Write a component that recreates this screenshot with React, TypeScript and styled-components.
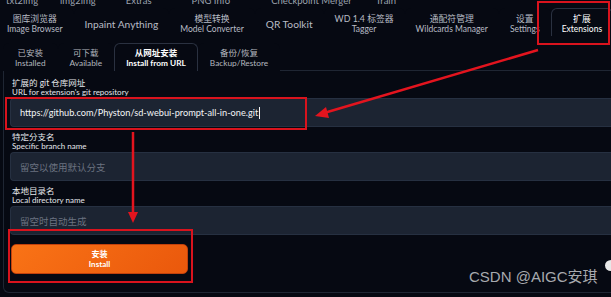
import React from "react";
import styled, { createGlobalStyle } from "styled-components";

const GlobalStyle = createGlobalStyle`
  html, body {
    margin: 0;
    padding: 0;
    background: #060912;
    overflow: hidden;
  }
  body {
    font-family: Lato, "Noto Sans CJK SC", sans-serif;
  }
`;

const Page = styled.div`
  position: relative;
  width: 611px;
  height: 297px;
  overflow: hidden;
  background: #060912;
  color: #e5e7eb;
`;

const TopRow = styled.div`
  display: flex;
  height: 8px;
  overflow: hidden;
`;

const TopItem = styled.span<{ $ml: number }>`
  margin-left: ${p => p.$ml}px;
  margin-top: -5px;
  font-size: 9.5px;
  line-height: 12px;
  color: #9ca3af;
  white-space: nowrap;
`;

const MainTabs = styled.div`
  display: flex;
  height: 28px;
  margin-left: -4px;
  box-sizing: border-box;
  border-bottom: 1px solid #1a202c;
`;

const Tab = styled.div<{ $active?: boolean }>`
  display: flex;
  flex-direction: column;
  align-items: center;
  justify-content: center;
  padding: 3px 10px 0;
  margin-bottom: -1px;
  box-sizing: border-box;
  white-space: nowrap;
  color: ${p => (p.$active ? "#ffffff" : "#b8bcc5")};
  background: #060912;
  border: 1px solid ${p => (p.$active ? "#2a3140" : "transparent")};
  border-bottom: none;
  border-radius: 6px 6px 0 0;
`;

const TabCn = styled.span`
  font-size: 8.8px;
  line-height: 10px;
`;

const TabEn = styled.span`
  font-size: 8.5px;
  line-height: 10px;
`;

const TabSingle = styled.span`
  font-size: 10.2px;
  line-height: 12px;
`;

const SubTabs = styled.div`
  display: flex;
  height: 27px;
  margin-top: 7px;
  padding-left: 3px;
`;

const SubTab = styled(Tab)`
  padding: 0 11px;
  margin-bottom: 0;
  height: 28px;
  position: relative;
  z-index: 1;
  font-weight: ${p => (p.$active ? 700 : 400)};
  color: ${p => (p.$active ? "#ffffff" : "#b3b7bf")};
`;

const SubCn = styled.span`
  font-size: 8.5px;
  line-height: 10px;
`;

const SubEn = styled.span`
  font-size: 8.3px;
  line-height: 10px;
`;

const Panel = styled.div`
  margin-left: 3px;
  width: 640px;
  height: 223px;
  box-sizing: border-box;
  border: 1px solid #1f2633;
  border-right: none;
  border-radius: 0 0 0 6px;
  padding: 8px 0 0 6px;
  display: flex;
  flex-direction: column;
  gap: 6px;
`;

const Field = styled.div`
  display: flex;
  flex-direction: column;
`;

const LabelCn = styled.span`
  font-size: 8.5px;
  line-height: 9px;
  color: #e5e7eb;
  padding-left: 2px;
`;

const LabelEn = styled.span`
  font-size: 8px;
  line-height: 8px;
  color: #e5e7eb;
  padding-left: 2px;
  margin-bottom: 2px;
`;

const TextBox = styled.div<{ $empty?: boolean }>`
  height: 29px;
  box-sizing: border-box;
  display: flex;
  align-items: center;
  padding-left: 9px;
  background: #1c2432;
  border: 1px solid #263041;
  border-right: none;
  border-radius: 4px 0 0 4px;
  font-size: ${p => (p.$empty ? "9.5px" : "9.2px")};
  color: ${p => (p.$empty ? "#6b7280" : "#f3f4f6")};
  white-space: nowrap;
`;

const Caret = styled.span`
  display: inline-block;
  width: 1px;
  height: 12px;
  margin-left: 1px;
  background: #f3f4f6;
`;

const InstallButton = styled.button`
  margin: 3px 0 0 1px;
  width: 177px;
  height: 30px;
  border: 1px solid #c2410c;
  border-radius: 5px;
  background: linear-gradient(135deg, #f97316 0%, #ea580c 100%);
  color: #ffffff;
  font-family: Lato, "Noto Sans CJK SC", sans-serif;
  font-weight: 700;
  display: flex;
  flex-direction: column;
  align-items: center;
  justify-content: center;
  padding: 0;
`;

const BtnCn = styled.span`
  font-size: 8px;
  line-height: 10px;
`;

const BtnEn = styled.span`
  font-size: 8px;
  line-height: 10px;
`;

const Mark = styled.div<{ $x: number; $y: number; $w: number; $h: number }>`
  position: absolute;
  left: ${p => p.$x}px;
  top: ${p => p.$y}px;
  width: ${p => p.$w}px;
  height: ${p => p.$h}px;
  box-sizing: border-box;
  border: 2px solid #d9131d;
  pointer-events: none;
`;

const Arrows = styled.svg`
  position: absolute;
  left: 0;
  top: 0;
  pointer-events: none;
`;

const Watermark = styled.div`
  position: absolute;
  left: 469px;
  top: 268px;
  font-family: "Liberation Sans", "Noto Sans CJK SC", sans-serif;
  font-size: 15px;
  line-height: 18px;
  color: #a7a9ae;
  white-space: nowrap;
`;

const EdgeIcon = styled.div`
  position: absolute;
  left: 605px;
  top: 260px;
  width: 12px;
  height: 11px;
  border-radius: 50%;
  background: #e8e8e8;
`;

const topItems = [
  { label: "txt2img", ml: 6 },
  { label: "img2img", ml: 22 },
  { label: "Extras", ml: 30 },
  { label: "PNG Info", ml: 40 },
  { label: "Checkpoint Merger", ml: 41 },
  { label: "Train", ml: 24 },
];

const mainTabs = [
  { cn: "图库浏览器", en: "Image Browser" },
  { single: "Inpaint Anything" },
  { cn: "模型转换", en: "Model Converter" },
  { single: "QR Toolkit" },
  { cn: "WD 1.4 标签器", en: "Tagger" },
  { cn: "通配符管理", en: "Wildcards Manager" },
  { cn: "设置", en: "Settings" },
  { cn: "扩展", en: "Extensions", active: true },
];

const subTabs = [
  { cn: "已安装", en: "Installed" },
  { cn: "可下载", en: "Available" },
  { cn: "从网址安装", en: "Install from URL", active: true },
  { cn: "备份/恢复", en: "Backup/Restore" },
];

const fields = [
  { cn: "扩展的 git 仓库网址", en: "URL for extension's git repository", value: "https://github.com/Physton/sd-webui-prompt-all-in-one.git" },
  { cn: "特定分支名", en: "Specific branch name", placeholder: "留空以使用默认分支" },
  { cn: "本地目录名", en: "Local directory name", placeholder: "留空时自动生成" },
];

export default function App() {
  return (
    <>
      <GlobalStyle />
      <Page>
        <TopRow>
          {topItems.map(t => (
            <TopItem key={t.label} $ml={t.ml}>
              {t.label}
            </TopItem>
          ))}
        </TopRow>

        <MainTabs>
          {mainTabs.map((t, i) => (
            <Tab key={i} $active={t.active}>
              {t.single ? (
                <TabSingle>{t.single}</TabSingle>
              ) : (
                <>
                  <TabCn>{t.cn}</TabCn>
                  <TabEn>{t.en}</TabEn>
                </>
              )}
            </Tab>
          ))}
        </MainTabs>

        <SubTabs>
          {subTabs.map(t => (
            <SubTab key={t.en} $active={t.active}>
              <SubCn>{t.cn}</SubCn>
              <SubEn>{t.en}</SubEn>
            </SubTab>
          ))}
        </SubTabs>

        <Panel>
          {fields.map(f => (
            <Field key={f.en}>
              <LabelCn>{f.cn}</LabelCn>
              <LabelEn>{f.en}</LabelEn>
              {f.value ? (
                <TextBox>
                  {f.value}
                  <Caret />
                </TextBox>
              ) : (
                <TextBox $empty>{f.placeholder}</TextBox>
              )}
            </Field>
          ))}
          <InstallButton>
            <BtnCn>安装</BtnCn>
            <BtnEn>Install</BtnEn>
          </InstallButton>
        </Panel>

        <Mark $x={537} $y={1} $w={73} $h={44} />
        <Mark $x={5} $y={97} $w={302} $h={33} />
        <Mark $x={8} $y={229} $w={185} $h={54} />

        <Arrows width={611} height={297} viewBox="0 0 611 297">
          <line x1={538} y1={50} x2={324} y2={113} stroke="#e3141e" strokeWidth={2.5} />
          <polygon points="315,116 326,107 329,118" fill="#e3141e" />
          <line x1={133} y1={132} x2={133} y2={214} stroke="#e3141e" strokeWidth={2.5} />
          <polygon points="133,223 128,212 138,212" fill="#e3141e" />
        </Arrows>

        <Watermark>CSDN @AIGC安琪</Watermark>
        <EdgeIcon />
      </Page>
    </>
  );
}
